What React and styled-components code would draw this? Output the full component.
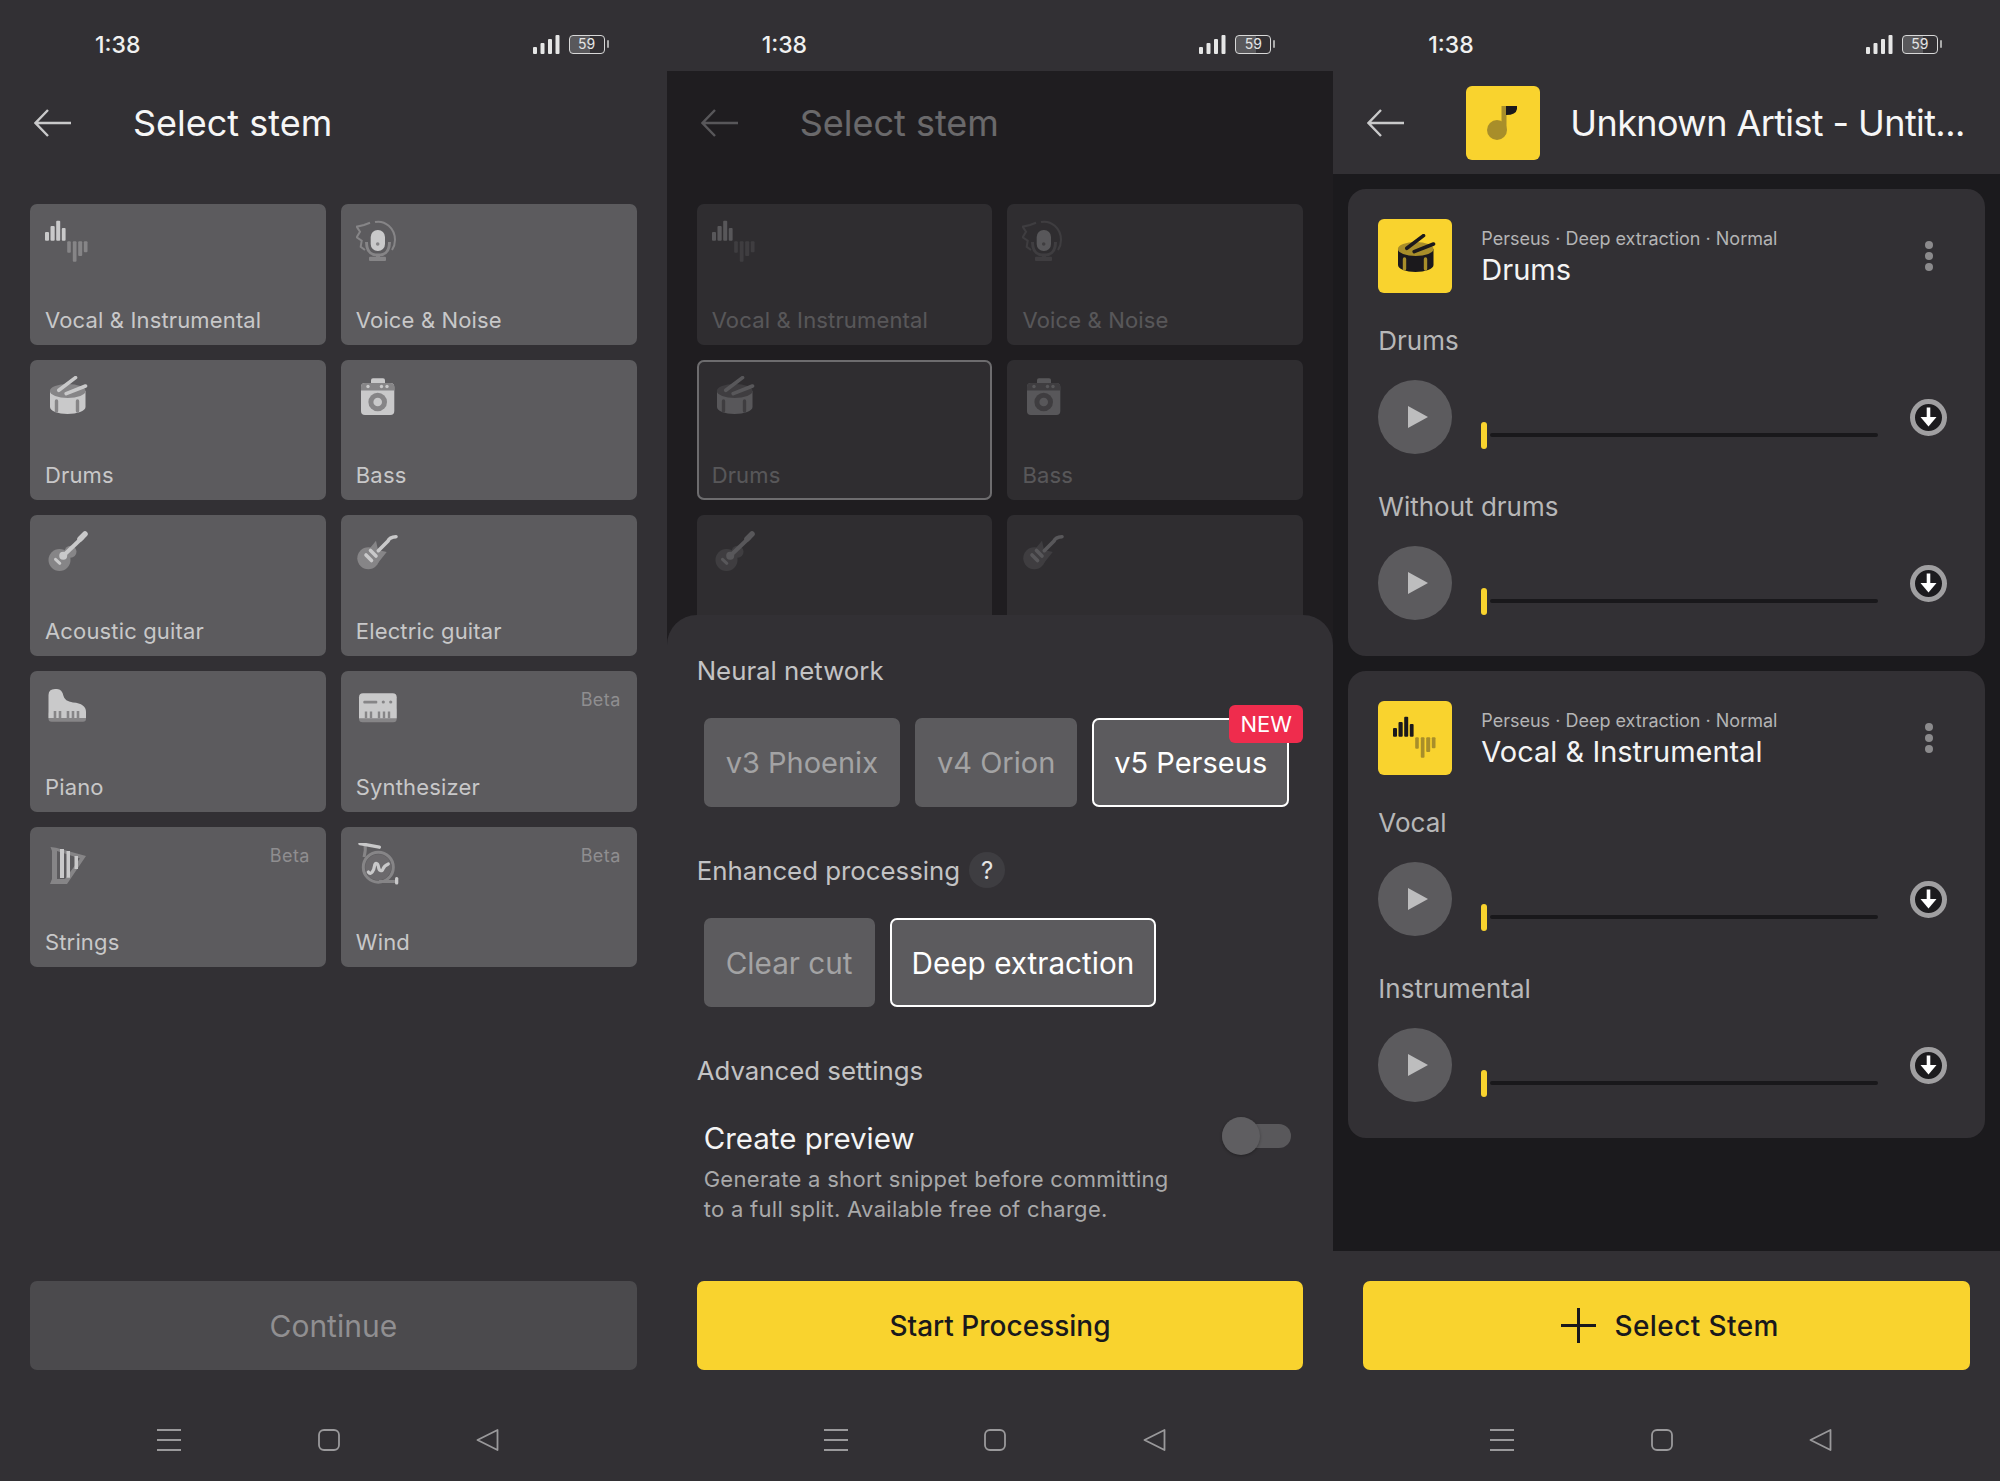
import React from 'react'
import styled, { createGlobalStyle } from 'styled-components'

const GlobalStyle = createGlobalStyle`
  * { box-sizing: border-box; }
  html, body { margin: 0; padding: 0; background: #323034; }
  body { font-family: Inter, "Noto Sans", sans-serif; color: #fff; }
`

const Page = styled.div`
  display: flex;
  width: 2000px;
  height: 1481px;
  overflow: hidden;
`
const Phone = styled.div`
  position: relative;
  display: flex;
  flex-direction: column;
  flex: 0 0 33.3333%;
  height: 100%;
  background: #323034;
`
const StatusBar = styled.div`
  position: relative;
  z-index: 3;
  display: flex;
  align-items: center;
  justify-content: space-between;
  flex: 0 0 71px;
  padding: 18px 62px 0 95px;
  background: #323034;
`
const Time = styled.span`
  font-size: 23px;
  font-weight: 500;
  color: #f0f0f0;
`
const StatusRight = styled.div`
  display: flex;
  align-items: center;
  gap: 9px;
`
const Battery = styled.div`
  position: relative;
  width: 36px;
  height: 19px;
  border: 1.5px solid #d8d8d8;
  border-radius: 4px;
  background: linear-gradient(90deg, #59585b 59%, transparent 59%);
  font-size: 14px;
  line-height: 16px;
  text-align: center;
  color: #e4e4e4;
  &::after {
    content: '';
    position: absolute;
    right: -5px;
    top: 4px;
    width: 2px;
    height: 8px;
    border-radius: 1px;
    background: #aaa;
  }
`
const Header = styled.header`
  display: flex;
  align-items: center;
  flex: 0 0 103px;
  padding-left: 34px;
`
const BackSlot = styled.div`
  display: flex;
  flex: 0 0 99px;
`
const Title = styled.h1`
  margin: 0;
  font-size: 36px;
  font-weight: 400;
  letter-spacing: ${p => (p.$tight ? '-0.6px' : '0')};
  color: #f6f6f6;
  white-space: nowrap;
`
const Album = styled.div`
  display: flex;
  align-items: center;
  justify-content: center;
  flex: 0 0 74px;
  height: 74px;
  margin-right: 30px;
  border-radius: 6px;
  background: #f9d32e;
`
const StemGrid = styled.div`
  display: grid;
  grid-template-columns: 1fr 1fr;
  grid-auto-rows: 140.7px;
  gap: 15px;
  flex: 1;
  align-content: start;
  padding: 30px 30px 0;
`
const Tile = styled.div`
  display: flex;
  flex-direction: column;
  justify-content: space-between;
  padding: 16px 16px 10px 15px;
  box-shadow: ${p => (p.$selected ? 'inset 0 0 0 2px #fff' : 'none')};
  border-radius: 7px;
  background: #5c5b5e;
`
const TileTop = styled.div`
  display: flex;
  align-items: flex-start;
  justify-content: space-between;
`
const Beta = styled.span`
  margin-top: 2px;
  font-size: 18px;
  line-height: 22px;
  letter-spacing: 0.4px;
  color: #8f8e90;
`
const TileLabel = styled.span`
  font-size: 22px;
  line-height: 30px;
  letter-spacing: 0.15px;
  color: #c8c8c9;
`
const Footer = styled.footer`
  display: flex;
  flex-direction: column;
  flex: 0 0 230px;
  padding-top: 30px;
  margin-top: ${p => (p.$push ? 'auto' : '0')};
  background: #323034;
`
const ActionButton = styled.button`
  display: flex;
  align-items: center;
  justify-content: center;
  gap: 19px;
  flex: 0 0 89px;
  margin: 0 30px;
  padding: 0;
  border: 0;
  border-radius: 7px;
  background: ${p => (p.$primary ? '#f9d32e' : '#4b4a4d')};
  color: ${p => (p.$primary ? '#1a191c' : '#908f91')};
  font-family: inherit;
  font-size: ${p => (p.$primary ? '28px' : '30px')};
  font-weight: ${p => (p.$primary ? 500 : 400)};
  letter-spacing: ${p => (p.$spaced ? '0.4px' : '0')};
`
const NavBar = styled.nav`
  display: flex;
  align-items: center;
  justify-content: space-between;
  flex: 1;
  width: 342px;
  margin: 0 0 0 157px;
  padding-top: 29px;
`
const Scrim = styled.div`
  position: absolute;
  z-index: 1;
  inset: 71px 0 0 0;
  background: rgba(19, 18, 21, 0.62);
`
const Sheet = styled.section`
  position: absolute;
  z-index: 2;
  inset: 615px 0 0 0;
  display: flex;
  flex-direction: column;
  padding-top: 35px;
  border-radius: 30px 30px 0 0;
  background: #323034;
`
const SectionLabel = styled.div`
  display: flex;
  align-items: center;
  gap: 9px;
  height: 40px;
  margin: ${p => (p.$first ? '0' : '43px')} 30px 28px;
  font-size: 25.8px;
  color: #c3c3c4;
`
const HelpDot = styled.span`
  display: flex;
  align-items: center;
  justify-content: center;
  width: 36px;
  height: 36px;
  border-radius: 50%;
  background: #3e3d41;
  font-size: 24px;
  color: #e4e4e4;
`
const ChipRow = styled.div`
  display: flex;
  gap: 15px;
  margin: 0 37px;
  font-size: ${p => p.$size};
`
const Chip = styled.div`
  position: relative;
  display: flex;
  align-items: center;
  height: 89px;
  padding: 0 20px;
  border: 2px solid ${p => (p.$active ? '#fff' : '#5c5b5e')};
  border-radius: 7px;
  background: #5c5b5e;
  white-space: nowrap;
  color: ${p => (p.$active ? '#fff' : '#a3a3a4')};
`
const NewBadge = styled.span`
  position: absolute;
  top: -15px;
  right: -16px;
  width: 74px;
  height: 38px;
  border-radius: 6px;
  background: #ef2c4d;
  font-size: 22px;
  line-height: 38px;
  text-align: center;
  color: #fff;
`
const PreviewRow = styled.div`
  display: flex;
  justify-content: space-between;
  margin: 0 42px 0 37px;
`
const PreviewTitle = styled.div`
  font-size: 29.5px;
  line-height: 40px;
  color: #f4f4f4;
`
const PreviewDesc = styled.div`
  margin-top: 6px;
  font-size: 22px;
  line-height: 30px;
  letter-spacing: 0.3px;
  color: #a9a9aa;
`
const Toggle = styled.div`
  position: relative;
  width: 69px;
  height: 24px;
  margin-top: 6px;
  border-radius: 12px;
  background: #59585b;
  &::before {
    content: '';
    position: absolute;
    left: 0;
    top: -7px;
    width: 38px;
    height: 38px;
    border-radius: 50%;
    background: #5f5e61;
    box-shadow: 0 1px 3px rgba(0, 0, 0, 0.3);
  }
`
const Results = styled.main`
  display: flex;
  flex-direction: column;
  gap: 15px;
  flex: 1;
  padding: 15px;
  background: #1b1a1d;
`
const Card = styled.article`
  padding: 30px 38px 36px 30px;
  border-radius: 18px;
  background: #323034;
`
const CardHead = styled.div`
  display: flex;
  align-items: center;
`
const CardIcon = styled(Album)`
  margin-right: 29px;
`
const CardMeta = styled.div`
  display: flex;
  flex-direction: column;
  padding-top: 3px;
`
const MetaLine = styled.span`
  font-size: 18px;
  line-height: 24px;
  color: #b4b4b5;
`
const CardTitle = styled.span`
  font-size: 29px;
  line-height: 38px;
  color: #f4f4f4;
`
const Kebab = styled.svg`
  margin-left: auto;
  margin-right: 13px;
`
const TrackLabel = styled.div`
  margin-top: ${p => (p.$first ? '31px' : '36px')};
  padding-bottom: 2px;
  font-size: 26px;
  line-height: 34px;
  color: #b7b7b8;
`
const Player = styled.div`
  display: flex;
  align-items: center;
  margin-top: 20px;
`
const PlayButton = styled.div`
  display: flex;
  align-items: center;
  justify-content: center;
  flex: 0 0 74px;
  height: 74px;
  padding-left: 6px;
  border-radius: 50%;
  background: #5c5b5e;
`
const Slider = styled.div`
  display: flex;
  align-items: center;
  gap: 3px;
  flex: 1;
  height: 27px;
  margin: 36px 32px 0 29px;
`
const Thumb = styled.span`
  flex: 0 0 6px;
  height: 27px;
  border-radius: 3px;
  background: #f9d32e;
`
const Track = styled.span`
  flex: 1;
  height: 4px;
  border-radius: 2px;
  background: #19181b;
`
const PlusSvg = styled.svg`
  margin-left: 6px;
`

const TILE_ICON = { a: '#c9c9ca', b: '#868587' }
const CARD_ICON = { a: '#1b191c', b: '#a88e2a' }

const VocalIcon = ({ a, b }) => (
  <svg width="44" height="44" viewBox="0 0 44 44">
    <g fill={a}>
      <rect x="0" y="12" width="4" height="8.7" rx="1" />
      <rect x="5.5" y="6" width="4.2" height="14.7" rx="1" />
      <rect x="11.2" y="0.7" width="4" height="20" rx="1" />
      <rect x="16.8" y="8" width="3.8" height="12.7" rx="1" />
    </g>
    <g fill={b}>
      <rect x="22.2" y="21.3" width="3.6" height="11.4" rx="1" />
      <rect x="27.8" y="21.3" width="3.7" height="20.4" rx="1" />
      <rect x="33.2" y="21.3" width="4" height="14.7" rx="1" />
      <rect x="38.8" y="21.3" width="3.7" height="11" rx="1" />
    </g>
  </svg>
)

const VoiceIcon = ({ a, b }) => (
  <svg width="44" height="44" viewBox="0 0 44 44" fill="none">
    <path d="M19 2 C29 0 39 8 39 20 C39 24 38 27 36 30" stroke={b} strokeWidth="2" />
    <path d="M14 2.7 L8 5 L0.7 6.7 L4 11.7 L0.7 17.3 L5.7 20.7 L4.7 26.7 L9 30" stroke={b} strokeWidth="2" />
    <path d="M10.5 22 C10.5 31 14 35 22 35 C30 35 33.5 31 33.5 22" stroke={b} strokeWidth="3" />
    <rect x="20" y="34" width="4" height="4" fill={b} />
    <rect x="13" y="36.7" width="17" height="4.3" rx="1" fill={b} />
    <rect x="14.7" y="10" width="14.3" height="21" rx="7" fill={a} />
    <circle cx="21.7" cy="24" r="1.8" fill={b} />
  </svg>
)

const DrumIcon = ({ a, b }) => (
  <svg width="44" height="44" viewBox="0 0 44 44" fill="none">
    <path d="M5 15 V31 C5 35 13 38 22.5 38 C32 38 40.5 35 40.5 31 V15 Z" fill={a} />
    <ellipse cx="22.7" cy="15" rx="17.8" ry="7" fill={b} />
    <path d="M11.5 25 V35 M32.5 25 V35" stroke={b} strokeWidth="3.4" strokeLinecap="round" />
    <path d="M13.8 14.3 L30.5 1.6 M21.2 17.6 L40.5 10" stroke={a} strokeWidth="3.6" strokeLinecap="round" />
  </svg>
)

const BassIcon = ({ a, b }) => (
  <svg width="44" height="44" viewBox="0 0 44 44">
    <rect x="15" y="2.3" width="14" height="6" rx="2" fill={a} />
    <rect x="5" y="7" width="33.3" height="32" rx="4" fill={a} />
    <path d="M5 14.5 V11 Q5 7 9 7 H34.3 Q38.3 7 38.3 11 V14.5 Z" fill={b} />
    <circle cx="12" cy="10.5" r="1.7" fill={a} />
    <circle cx="25.5" cy="10.5" r="1.7" fill={a} />
    <circle cx="31" cy="10.5" r="1.7" fill={a} />
    <circle cx="21.7" cy="26" r="9.3" fill={b} />
    <circle cx="21.7" cy="26" r="4.3" fill={a} />
  </svg>
)

const AcousticIcon = ({ a, b }) => (
  <svg width="44" height="44" viewBox="0 0 44 44" fill="none">
    <circle cx="14.5" cy="29" r="11" fill={b} />
    <circle cx="25.5" cy="20.7" r="6" fill={b} />
    <path d="M18 25 L38 6" stroke={a} strokeWidth="4" />
    <path d="M35 8 L40 3" stroke={a} strokeWidth="5.5" strokeLinecap="round" />
    <circle cx="18.2" cy="24.7" r="4" fill={a} />
    <path d="M10.5 28.3 L14.8 32.3" stroke={a} strokeWidth="3" strokeLinecap="round" />
  </svg>
)

const ElectricIcon = ({ a, b }) => (
  <svg width="44" height="44" viewBox="0 0 44 44" fill="none">
    <circle cx="12.3" cy="27.3" r="11" fill={b} />
    <path d="M10 22 L20 9.7 L22 19 L30.7 21 L22 32 Z" fill={b} />
    <path d="M22.3 19.7 L32 10 Q33.5 6 40 5.7" stroke={a} strokeWidth="3.6" strokeLinecap="round" />
    <path d="M14.5 19.5 L20 25 M10 24 L15.5 29.5" stroke={a} strokeWidth="3.6" strokeLinecap="round" />
  </svg>
)

const PianoIcon = ({ a, b }) => (
  <svg width="44" height="44" viewBox="0 0 44 44">
    <rect x="3.5" y="24" width="37.5" height="10.7" rx="3" fill={b} />
    <path d="M3.5 31 V8 Q3.5 2 10 2 H12 Q17 2 18.5 9 Q19.5 14 28 15.5 Q41 16.5 41 25 V31 Z" fill={a} />
    <path d="M10 24 V31 M15 24 V31 M23 24 V31 M28 24 V31 M33 24 V31" stroke={b} strokeWidth="2.6" />
  </svg>
)

const SynthIcon = ({ a, b }) => (
  <svg width="44" height="44" viewBox="0 0 44 44">
    <rect x="3" y="20" width="37.7" height="15.3" rx="3.5" fill={b} />
    <path d="M3 31.3 V10.3 Q3 6.3 7 6.3 H36.7 Q40.7 6.3 40.7 10.3 V31.3 Z" fill={a} />
    <rect x="7.3" y="13.7" width="14" height="2.8" rx="1" fill={b} />
    <circle cx="27.3" cy="15" r="1.6" fill={b} />
    <circle cx="34.7" cy="15" r="1.6" fill={b} />
    <path d="M10 24.5 V31.3 M15 24.5 V31.3 M23 24.5 V31.3 M28 24.5 V31.3 M33 24.5 V31.3" stroke={b} strokeWidth="2.4" />
  </svg>
)

const HarpIcon = ({ a, b }) => (
  <svg width="44" height="44" viewBox="0 0 44 44" fill="none">
    <path d="M5.5 4 L11 4.7 L41 13 L22 41 H5 L7 36 V8 Z M12 8 V36 H20 L35 15.5 Z" fill={b} fillRule="evenodd" />
    <rect x="15" y="6" width="4" height="29" fill={a} />
    <rect x="21.5" y="8" width="3.5" height="26.7" fill={a} />
    <rect x="29.5" y="13" width="3.5" height="13" fill={a} />
  </svg>
)

const HornIcon = ({ a, b }) => (
  <svg width="44" height="44" viewBox="0 0 44 44" fill="none">
    <path d="M9 2.5 C10 7 9 10 8 14 M23 38.5 H40" stroke={b} strokeWidth="3" />
    <circle cx="22.3" cy="24.2" r="15" stroke={b} strokeWidth="3" />
    <circle cx="22.3" cy="24.2" r="13" fill={b} fillOpacity="0.35" />
    <path d="M4 0.6 L23.3 4.2" stroke={a} strokeWidth="3.4" strokeLinecap="round" />
    <path d="M12.3 29 C15 33 18 27 18.5 23 C19 19 22 20 22.5 24 C23 28 26 29 27 26 C28 23 30 22 32.3 21" stroke={a} strokeWidth="3.2" strokeLinecap="round" />
    <rect x="39" y="34" width="3.3" height="7.5" rx="1.5" fill={a} />
  </svg>
)

const SignalIcon = () => (
  <svg width="27" height="19" viewBox="0 0 27 19" fill="#e6e6e6">
    <rect x="0" y="12" width="4" height="7" rx="1" />
    <rect x="7.5" y="8" width="4" height="11" rx="1" />
    <rect x="15" y="4" width="4" height="15" rx="1" />
    <rect x="22.5" y="0" width="4" height="19" rx="1" />
  </svg>
)

const BackArrow = () => (
  <svg width="37" height="28" viewBox="0 0 37 28" fill="none" stroke="#c9c9ca" strokeWidth="2.4">
    <path d="M37 14 H2 M14 1 L1.5 14 L14 27" />
  </svg>
)

const NoteIcon = () => (
  <svg width="34" height="36" viewBox="0 0 34 36">
    <circle cx="11" cy="25" r="10" fill="#a88e2a" />
    <rect x="15.5" y="1" width="5" height="24" fill="#a88e2a" />
    <path d="M20 1 H31 V4 Q30 10 20 10 Z" fill="#1b191c" />
  </svg>
)

const KebabIcon = () => (
  <Kebab width="10" height="32" viewBox="0 0 10 32" fill="#8b8a8c">
    <circle cx="5" cy="5" r="4" />
    <circle cx="5" cy="16" r="4" />
    <circle cx="5" cy="27" r="4" />
  </Kebab>
)

const PlayIcon = () => (
  <svg width="22" height="24" viewBox="0 0 22 24">
    <path d="M1 1 L21 12 L1 23 Z" fill="#bdbdbe" />
  </svg>
)

const DownloadIcon = () => (
  <svg width="37" height="37" viewBox="0 0 37 37" fill="none">
    <circle cx="18.5" cy="18.5" r="16" stroke="#a09fa1" strokeWidth="5" fill="#1c1b1e" />
    <path d="M18.5 8.5 V20" stroke="#fff" strokeWidth="3.6" />
    <path d="M10.5 18 H26.5 L18.5 27.5 Z" fill="#fff" />
  </svg>
)

const PlusIcon = () => (
  <PlusSvg width="35" height="35" viewBox="0 0 35 35" stroke="#1a191c" strokeWidth="3">
    <path d="M17.5 0 V35 M0 17.5 H35" />
  </PlusSvg>
)

const NavIcons = () => (
  <NavBar>
    <svg width="24" height="22" viewBox="0 0 24 22" stroke="#9a999b" strokeWidth="1.8">
      <path d="M0 1 H24 M0 11 H24 M0 21 H24" />
    </svg>
    <svg width="22" height="22" viewBox="0 0 22 22" fill="none" stroke="#9a999b" strokeWidth="1.8">
      <rect x="1" y="1" width="20" height="20" rx="5" />
    </svg>
    <svg width="23" height="22" viewBox="0 0 23 22" fill="none" stroke="#9a999b" strokeWidth="1.8" strokeLinejoin="round">
      <path d="M1.5 11 L21.5 1 V21 Z" />
    </svg>
  </NavBar>
)

const STEMS = [
  { name: 'Vocal & Instrumental', Icon: VocalIcon },
  { name: 'Voice & Noise', Icon: VoiceIcon },
  { name: 'Drums', Icon: DrumIcon },
  { name: 'Bass', Icon: BassIcon },
  { name: 'Acoustic guitar', Icon: AcousticIcon },
  { name: 'Electric guitar', Icon: ElectricIcon },
  { name: 'Piano', Icon: PianoIcon },
  { name: 'Synthesizer', Icon: SynthIcon, beta: true },
  { name: 'Strings', Icon: HarpIcon, beta: true },
  { name: 'Wind', Icon: HornIcon, beta: true },
]

const RESULTS = [
  { title: 'Drums', Icon: DrumIcon, tracks: ['Drums', 'Without drums'] },
  { title: 'Vocal & Instrumental', Icon: VocalIcon, tracks: ['Vocal', 'Instrumental'] },
]

const Status = () => (
  <StatusBar>
    <Time>1:38</Time>
    <StatusRight>
      <SignalIcon />
      <Battery>59</Battery>
    </StatusRight>
  </StatusBar>
)

const Stems = ({ selected }) => (
  <StemGrid>
    {STEMS.map(({ name, Icon, beta }) => (
      <Tile key={name} $selected={name === selected}>
        <TileTop>
          <Icon {...TILE_ICON} />
          {beta && <Beta>Beta</Beta>}
        </TileTop>
        <TileLabel>{name}</TileLabel>
      </Tile>
    ))}
  </StemGrid>
)

const SelectScreen = () => (
  <Phone>
    <Status />
    <Header>
      <BackSlot><BackArrow /></BackSlot>
      <Title>Select stem</Title>
    </Header>
    <Stems />
    <Footer>
      <ActionButton>Continue</ActionButton>
      <NavIcons />
    </Footer>
  </Phone>
)

const SettingsScreen = () => (
  <Phone>
    <Status />
    <Header>
      <BackSlot><BackArrow /></BackSlot>
      <Title>Select stem</Title>
    </Header>
    <Stems selected="Drums" />
    <Scrim />
    <Sheet>
      <SectionLabel $first>Neural network</SectionLabel>
      <ChipRow $size="29px">
        <Chip>v3 Phoenix</Chip>
        <Chip>v4 Orion</Chip>
        <Chip $active>
          v5 Perseus
          <NewBadge>NEW</NewBadge>
        </Chip>
      </ChipRow>
      <SectionLabel>
        Enhanced processing
        <HelpDot>?</HelpDot>
      </SectionLabel>
      <ChipRow $size="29.7px">
        <Chip>Clear cut</Chip>
        <Chip $active>Deep extraction</Chip>
      </ChipRow>
      <SectionLabel>Advanced settings</SectionLabel>
      <PreviewRow>
        <div>
          <PreviewTitle>Create preview</PreviewTitle>
          <PreviewDesc>
            Generate a short snippet before committing
            <br />
            to a full split. Available free of charge.
          </PreviewDesc>
        </div>
        <Toggle />
      </PreviewRow>
      <Footer $push>
        <ActionButton $primary>Start Processing</ActionButton>
        <NavIcons />
      </Footer>
    </Sheet>
  </Phone>
)

const ResultCard = ({ title, Icon, tracks }) => (
  <Card>
    <CardHead>
      <CardIcon><Icon {...CARD_ICON} /></CardIcon>
      <CardMeta>
        <MetaLine>Perseus · Deep extraction · Normal</MetaLine>
        <CardTitle>{title}</CardTitle>
      </CardMeta>
      <KebabIcon />
    </CardHead>
    {tracks.map((track, i) => (
      <div key={track}>
        <TrackLabel $first={i === 0}>{track}</TrackLabel>
        <Player>
          <PlayButton><PlayIcon /></PlayButton>
          <Slider>
            <Thumb />
            <Track />
          </Slider>
          <DownloadIcon />
        </Player>
      </div>
    ))}
  </Card>
)

const ResultsScreen = () => (
  <Phone>
    <Status />
    <Header>
      <BackSlot><BackArrow /></BackSlot>
      <Album><NoteIcon /></Album>
      <Title $tight>Unknown Artist - Untit...</Title>
    </Header>
    <Results>
      {RESULTS.map(r => <ResultCard key={r.title} {...r} />)}
    </Results>
    <Footer>
      <ActionButton $primary $spaced>
        <PlusIcon />
        Select Stem
      </ActionButton>
      <NavIcons />
    </Footer>
  </Phone>
)

export default function App() {
  return (
    <Page>
      <GlobalStyle />
      <SelectScreen />
      <SettingsScreen />
      <ResultsScreen />
    </Page>
  )
}
